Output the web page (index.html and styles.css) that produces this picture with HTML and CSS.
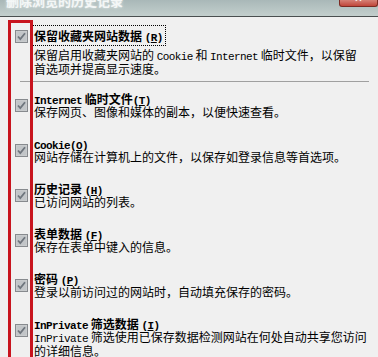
FILE: index.html
```html
<!DOCTYPE html>
<html lang="zh-CN">
<head>
    <meta charset="UTF-8">
    <title>删除浏览的历史记录</title>
    <link rel="stylesheet" href="styles.css">
</head>
<body>

<!-- Window title bar (cut at the top) -->
<div class="titlebar">
    <span class="title">删除浏览的历史记录</span>
    <span class="close-btn"><span class="close-x">✕</span></span>
</div>

<!-- Options -->
<div class="options">
    <div class="option option-first">
        <svg class="check" width="13" height="13" viewBox="0 0 13 13"><rect x="0.5" y="0.5" width="12" height="12" fill="#cfd1d3" stroke="#878a8e"/><rect x="1.5" y="1.5" width="10" height="10" fill="#c2c5c8"/><path d="M3 6.5 L5.3 9 L10 3.2" fill="none" stroke="#6e757d" stroke-width="1.8"/></svg>
        <div class="option-text">
            <div class="label"><span class="focus">保留收藏夹网站数据 <span class="lat">(<u>R</u>)</span></span></div>
            <div class="desc">保留启用收藏夹网站的 <span class="lat">Cookie</span> 和 <span class="lat">Internet</span> 临时文件，以保留<br>首选项并提高显示速度。</div>
        </div>
    </div>

    <div class="divider"></div>

    <div class="option">
        <svg class="check" width="13" height="13" viewBox="0 0 13 13"><rect x="0.5" y="0.5" width="12" height="12" fill="#cfd1d3" stroke="#878a8e"/><rect x="1.5" y="1.5" width="10" height="10" fill="#c2c5c8"/><path d="M3 6.5 L5.3 9 L10 3.2" fill="none" stroke="#6e757d" stroke-width="1.8"/></svg>
        <div class="option-text">
            <div class="label"><span class="lat">Internet</span> 临时文件<span class="lat">(<u>T</u>)</span></div>
            <div class="desc">保存网页、图像和媒体的副本，以便快速查看。</div>
        </div>
    </div>

    <div class="option">
        <svg class="check" width="13" height="13" viewBox="0 0 13 13"><rect x="0.5" y="0.5" width="12" height="12" fill="#cfd1d3" stroke="#878a8e"/><rect x="1.5" y="1.5" width="10" height="10" fill="#c2c5c8"/><path d="M3 6.5 L5.3 9 L10 3.2" fill="none" stroke="#6e757d" stroke-width="1.8"/></svg>
        <div class="option-text">
            <div class="label"><span class="lat">Cookie(<u>O</u>)</span></div>
            <div class="desc">网站存储在计算机上的文件，以保存如登录信息等首选项。</div>
        </div>
    </div>

    <div class="option">
        <svg class="check" width="13" height="13" viewBox="0 0 13 13"><rect x="0.5" y="0.5" width="12" height="12" fill="#cfd1d3" stroke="#878a8e"/><rect x="1.5" y="1.5" width="10" height="10" fill="#c2c5c8"/><path d="M3 6.5 L5.3 9 L10 3.2" fill="none" stroke="#6e757d" stroke-width="1.8"/></svg>
        <div class="option-text">
            <div class="label">历史记录 <span class="lat">(<u>H</u>)</span></div>
            <div class="desc">已访问网站的列表。</div>
        </div>
    </div>

    <div class="option">
        <svg class="check" width="13" height="13" viewBox="0 0 13 13"><rect x="0.5" y="0.5" width="12" height="12" fill="#cfd1d3" stroke="#878a8e"/><rect x="1.5" y="1.5" width="10" height="10" fill="#c2c5c8"/><path d="M3 6.5 L5.3 9 L10 3.2" fill="none" stroke="#6e757d" stroke-width="1.8"/></svg>
        <div class="option-text">
            <div class="label">表单数据 <span class="lat">(<u>F</u>)</span></div>
            <div class="desc">保存在表单中键入的信息。</div>
        </div>
    </div>

    <div class="option">
        <svg class="check" width="13" height="13" viewBox="0 0 13 13"><rect x="0.5" y="0.5" width="12" height="12" fill="#cfd1d3" stroke="#878a8e"/><rect x="1.5" y="1.5" width="10" height="10" fill="#c2c5c8"/><path d="M3 6.5 L5.3 9 L10 3.2" fill="none" stroke="#6e757d" stroke-width="1.8"/></svg>
        <div class="option-text">
            <div class="label">密码 <span class="lat">(<u>P</u>)</span></div>
            <div class="desc">登录以前访问过的网站时，自动填充保存的密码。</div>
        </div>
    </div>

    <div class="option">
        <svg class="check" width="13" height="13" viewBox="0 0 13 13"><rect x="0.5" y="0.5" width="12" height="12" fill="#cfd1d3" stroke="#878a8e"/><rect x="1.5" y="1.5" width="10" height="10" fill="#c2c5c8"/><path d="M3 6.5 L5.3 9 L10 3.2" fill="none" stroke="#6e757d" stroke-width="1.8"/></svg>
        <div class="option-text">
            <div class="label"><span class="lat">InPrivate</span> 筛选数据 <span class="lat">(<u>I</u>)</span></div>
            <div class="desc"><span class="lat">InPrivate</span> 筛选使用已保存数据检测网站在何处自动共享您访问<br>的详细信息。</div>
        </div>
    </div>
</div>

<!-- Red annotation frame over the checkboxes -->
<div class="highlight"></div>

</body>
</html>
```

FILE: styles.css
```css
body {
    margin: 0;
    background-color: #f0f0f0;
    font-family: "Noto Sans CJK SC", sans-serif;
    font-size: 12px;
    color: #000;
    overflow: hidden;
}
.titlebar {
    height: 16px;
    display: flex;
    justify-content: space-between;
    align-items: flex-start;
    background: linear-gradient(#a9b8b8, #c3cfcd);
    border-bottom: 1px solid #4a4f50;
    overflow: hidden;
}
.title {
    margin-left: 6px;
    margin-top: -8px;
    font-size: 13px;
    font-weight: bold;
    line-height: 18px;
    color: #f4f7f7;
    text-shadow: 0 0 3px #e8efee;
}
.close-btn {
    width: 37px;
    height: 7px;
    margin-top: -1px;
    display: flex;
    justify-content: center;
    align-items: flex-end;
    background: linear-gradient(#d98a80, #c0463a);
    border: 1px solid #7c2a22;
    border-top: none;
    border-radius: 0 0 3px 3px;
    overflow: hidden;
}
.close-x {
    color: #fff;
    font-family: "DejaVu Sans", sans-serif;
    font-size: 10px;
    font-weight: bold;
    line-height: 10px;
    margin-bottom: 2px;
}
.options {
    padding: 11px 0 0 15px;
}
.option {
    display: flex;
    gap: 6px;
    margin-bottom: 19px;
}
.option-text {
    line-height: 13px;
}
.check {
    flex: none;
    margin-top: 7px;
}
.option-first {
    margin-bottom: 6px;
}
.option-first .check {
    margin-top: 2px;
}
.label {
    height: 13px;
    font-weight: bold;
    white-space: nowrap;
}
.option-first .label {
    height: 14px;
    margin-top: 1px;
}
.focus {
    outline: 1px dotted #000;
    outline-offset: 0;
    padding: 1px 2px;
    margin-left: -2px;
}
.desc {
    white-space: nowrap;
}
.option-first .desc {
    margin-top: 5px;
}
.lat {
    font-family: "Liberation Mono", monospace;
    font-size: 11px;
    line-height: 10px;
    letter-spacing: -0.6px;
}
.divider {
    height: 1px;
    background-color: #a0a0a0;
    margin: 0 9px 10px 5px;
}
.highlight {
    position: absolute;
    left: 8px;
    top: 20px;
    width: 19px;
    height: 350px;
    border: 3px solid #c8141e;
}
```
